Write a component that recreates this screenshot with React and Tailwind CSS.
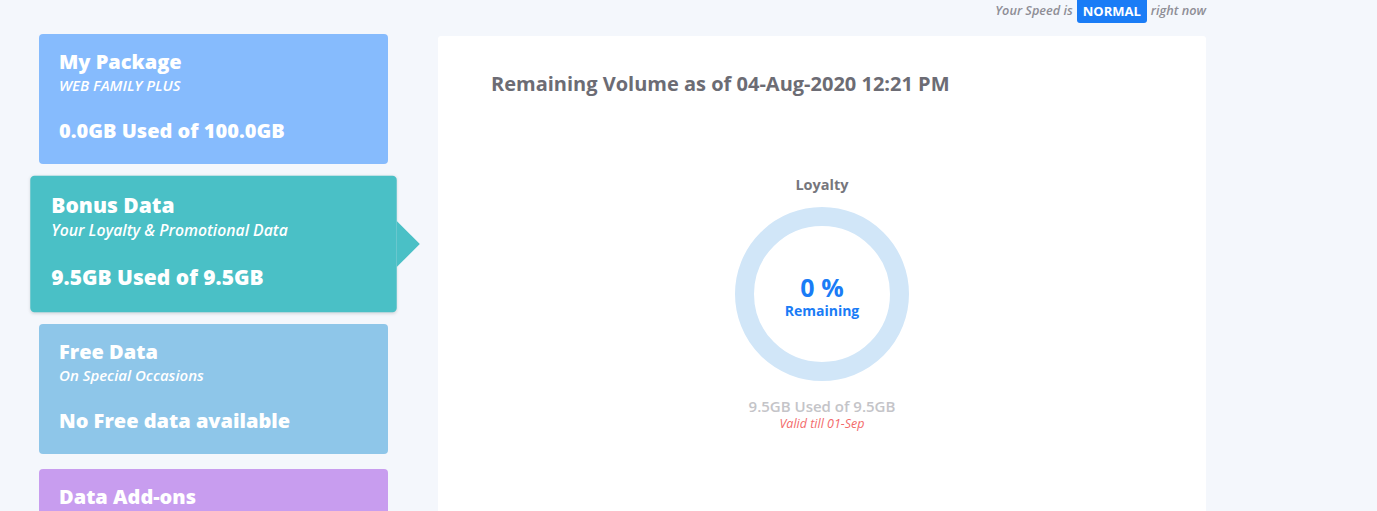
import React from "react";

const cards = [
  { title: "My Package", sub: "WEB FAMILY PLUS", usage: "0.0GB Used of 100.0GB", bg: "bg-[#86bbfd]" },
  { title: "Bonus Data", sub: "Your Loyalty & Promotional Data", usage: "9.5GB Used of 9.5GB", bg: "bg-[#4ac0c6]", active: true },
  { title: "Free Data", sub: "On Special Occasions", usage: "No Free data available", bg: "bg-[#8ec6e9]" },
  { title: "Data Add-ons", sub: "Extra data packs", usage: "No Add-ons", bg: "bg-[#c89def]" },
];

function PackageCard({ title, sub, usage, bg, active }) {
  return (
    <div
      className={`relative h-[130px] shrink-0 rounded-[4px] px-5 pt-[14px] text-white ${bg} ${
        active ? "scale-[1.05] shadow-[0_1px_3px_rgba(0,0,0,0.12)]" : ""
      }`}
    >
      <div className="text-[20px] font-extrabold leading-[28px]">{title}</div>
      <div className="text-[15px] font-semibold italic leading-[19px]">{sub}</div>
      <div className="mt-[22px] text-[20px] font-extrabold leading-[28px]">{usage}</div>
      {active && (
        <span className="absolute left-full top-1/2 -translate-y-1/2 border-y-[22px] border-l-[22px] border-y-transparent border-l-[#4ac0c6]" />
      )}
    </div>
  );
}

function Donut() {
  return (
    <div className="relative h-[176px] w-[176px]">
      <svg width="176" height="176" viewBox="0 0 176 176">
        <circle cx="88" cy="88" r="77.5" fill="none" stroke="#d1e6f8" strokeWidth="19" />
      </svg>
      <div className="absolute inset-0 flex flex-col items-center justify-center pt-[4px]">
        <div className="text-[25px] font-bold leading-[30px] text-[#1a7cf6]">0 %</div>
        <div className="text-[14px] font-bold leading-[18px] text-[#1a7cf6]">Remaining</div>
      </div>
    </div>
  );
}

export default function App() {
  return (
    <div className="h-[511px] overflow-hidden bg-[#f4f7fc] font-['Open_Sans',sans-serif]">
      <div className="ml-[39px] w-[1167px]">
        {/* Speed bar */}
        <div className="flex h-[34px] items-start justify-end gap-[4px] text-[12.7px]">
          <span className="pt-[1px] font-semibold italic text-[#8e8e96]">Your Speed is</span>
          <span className="rounded-b-[3px] bg-[#1a7cf6] px-[6px] pb-[3px] pt-[2px] text-[13px] font-bold leading-[18px] text-white">
            NORMAL
          </span>
          <span className="pt-[1px] font-semibold italic text-[#8e8e96]">right now</span>
        </div>

        <div className="flex items-start gap-[50px]">
          {/* Cards */}
          <div className="flex w-[349px] flex-col gap-[15px]">
            {cards.map((c) => (
              <PackageCard key={c.title} {...c} />
            ))}
          </div>

          {/* Volume panel */}
          <div className="mt-[2px] h-[520px] w-[768px] rounded-[3px] bg-white pl-[53px] pt-[34px]">
            <h2 className="text-[20px] font-bold leading-[28px] text-[#6c6c74]">
              Remaining Volume as of 04-Aug-2020 12:21 PM
            </h2>
            <div className="-ml-[53px] mt-[77px] flex flex-col items-center">
              <div className="text-[14.5px] font-bold leading-[20px] text-[#76767c]">Loyalty</div>
              <div className="mt-[11px]">
                <Donut />
              </div>
              <div className="mt-[14px] text-[15px] font-semibold leading-[20px] text-[#c4c4c8]">
                9.5GB Used of 9.5GB
              </div>
              <div className="text-[12.5px] italic leading-[16px] text-[#f36a6a]">Valid till 01-Sep</div>
            </div>
          </div>
        </div>
      </div>
    </div>
  );
}
